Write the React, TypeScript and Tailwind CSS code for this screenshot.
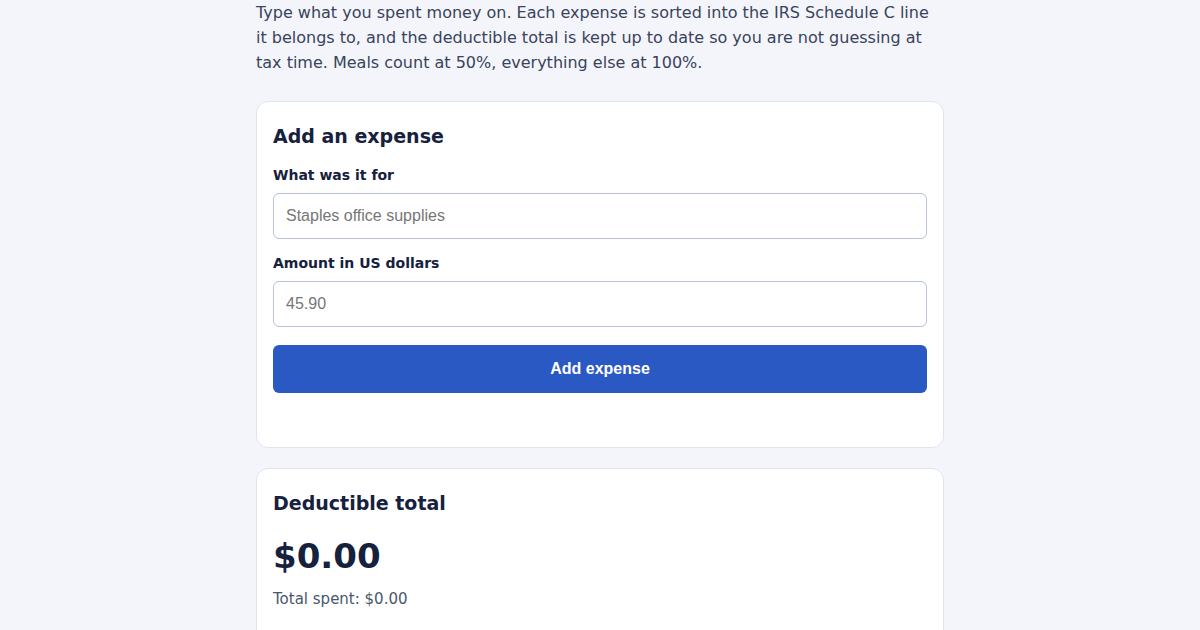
import React from "react";

const sans = "font-['DejaVu_Sans',sans-serif]";
const arial = "font-['Liberation_Sans',Arial,sans-serif]";

const Field = ({ label, placeholder, first }: { label: string; placeholder: string; first?: boolean }) => (
	<div className={first ? "mt-[15px]" : "mt-[14px]"}>
		<label className="block text-sm leading-5 font-bold text-[#16213d]">{label}</label>
		<input
			placeholder={placeholder}
			className={`${arial} mt-2 block h-[46px] w-full rounded-md border border-[#b8c3db] bg-white px-3 text-base text-[#16213d] placeholder:text-[#767676] outline-none`}
		/>
	</div>
);

const App = () => {
	return (
		<div className={`${sans} min-h-[630px] bg-[#f4f5fa]`}>
			<main className="mx-auto w-[688px]">
				<p className="text-base leading-[25px] text-[#38435c]">
					Type what you spent money on. Each expense is sorted into the IRS Schedule C line it belongs to, and the
					deductible total is kept up to date so you are not guessing at tax time. Meals count at 50%, everything
					else at 100%.
				</p>

				<section className="mt-[26px] rounded-xl border border-[#dfe4ef] bg-white p-4">
					<h2 className="mt-1 text-[19px] leading-7 font-bold text-[#16213d]">Add an expense</h2>
					<Field first label="What was it for" placeholder="Staples office supplies" />
					<Field label="Amount in US dollars" placeholder="45.90" />
					<button
						className={`${arial} mt-[18px] h-12 w-full rounded-md bg-[#2b59c3] text-base font-bold text-white`}
					>
						Add expense
					</button>
					<div className="h-[38px]" />
				</section>

				<section className="mt-5 rounded-xl border border-[#dfe4ef] bg-white p-4 pb-8">
					<h2 className="mt-1 text-[19px] leading-7 font-bold text-[#16213d]">Deductible total</h2>
					<div className="mt-[19px] text-[34px] leading-10 font-bold text-[#16213d]">$0.00</div>
					<p className="mt-[11px] text-[15px] leading-6 text-[#4a566e]">Total spent: $0.00</p>
				</section>
			</main>
		</div>
	);
};

export default App;
